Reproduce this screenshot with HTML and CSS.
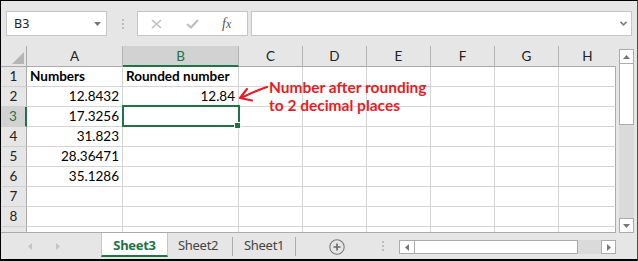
FILE: index.html
```html
<!DOCTYPE html>
<html>
<head>
<meta charset="utf-8">
<link rel="stylesheet" href="styles.css">
</head>
<body>
<div class="app">
  <div class="fbar">
    <div class="namebox"><span>B3</span><svg class="caret" width="7" height="4" viewBox="0 0 7 4"><polygon points="0,0 7,0 3.5,4" fill="#777"/></svg></div>
    <div class="grip"><i></i><i></i><i></i></div>
    <div class="fbtns">
      <svg class="bx" width="11" height="10" viewBox="0 0 11 10"><path d="M1 1 L10 9 M10 1 L1 9" stroke="#bdbdbd" stroke-width="1.4" fill="none"/></svg>
      <svg class="bc" width="13" height="10" viewBox="0 0 13 10"><path d="M1 5 L5 8.5 L12 1" stroke="#bdbdbd" stroke-width="2" fill="none"/></svg>
      <span class="fx">f<span>x</span></span>
    </div>
    <div class="finput"><svg width="7" height="5" viewBox="0 0 7 5"><path d="M0.5 0.8 L3.5 3.8 L6.5 0.8" stroke="#808080" stroke-width="1.6" fill="none"/></svg></div>
  </div>
  <div class="main">
    <div class="sheet">
      <div class="grid">
        <div class="corner"></div><div class="ch">A</div><div class="ch sel">B</div><div class="ch">C</div><div class="ch">D</div><div class="ch">E</div><div class="ch">F</div><div class="ch">G</div><div class="ch last">H</div>

        <div class="rh">1</div><div class="c b">Numbers</div><div class="c b">Rounded number</div><div class="c"></div><div class="c"></div><div class="c"></div><div class="c"></div><div class="c"></div><div class="c last"></div>
        <div class="rh">2</div><div class="c r">12.8432</div><div class="c r">12.84</div><div class="c"></div><div class="c"></div><div class="c"></div><div class="c"></div><div class="c"></div><div class="c last"></div>
        <div class="rh sel">3</div><div class="c r">17.3256</div><div class="c"></div><div class="c"></div><div class="c"></div><div class="c"></div><div class="c"></div><div class="c"></div><div class="c last"></div>
        <div class="rh">4</div><div class="c r">31.823</div><div class="c"></div><div class="c"></div><div class="c"></div><div class="c"></div><div class="c"></div><div class="c"></div><div class="c last"></div>
        <div class="rh">5</div><div class="c r">28.36471</div><div class="c"></div><div class="c"></div><div class="c"></div><div class="c"></div><div class="c"></div><div class="c"></div><div class="c last"></div>
        <div class="rh">6</div><div class="c r">35.1286</div><div class="c"></div><div class="c"></div><div class="c"></div><div class="c"></div><div class="c"></div><div class="c"></div><div class="c last"></div>
        <div class="rh">7</div><div class="c"></div><div class="c"></div><div class="c"></div><div class="c"></div><div class="c"></div><div class="c"></div><div class="c"></div><div class="c last"></div>
        <div class="rh">8</div><div class="c"></div><div class="c"></div><div class="c"></div><div class="c"></div><div class="c"></div><div class="c"></div><div class="c"></div><div class="c last"></div>
        <div class="rh"></div><div class="c"></div><div class="c"></div><div class="c"></div><div class="c"></div><div class="c"></div><div class="c"></div><div class="c"></div><div class="c last"></div>
      </div>
      <div class="selbox"></div>
      <div class="handle"></div>
      <svg class="arrow" width="36" height="26" viewBox="0 0 36 26"><path d="M31 9 C22 12 13 16 5 20 M11 11 L4 20 L16 22.5" stroke="#e81c24" stroke-width="2.2" fill="none" stroke-linecap="round" stroke-linejoin="round"/></svg>
      <div class="note">Number after rounding<br>to 2 decimal places</div>
    </div>
    <div class="vscroll">
      <div class="vbtn"><svg width="7" height="4" viewBox="0 0 7 4"><polygon points="0,4 7,4 3.5,0" fill="#777"/></svg></div>
      <div class="vthumb"></div>
      <div class="vtrack"></div>
      <div class="vbtn down"><svg width="7" height="4" viewBox="0 0 7 4"><polygon points="0,0 7,0 3.5,4" fill="#777"/></svg></div>
    </div>
  </div>
  <div class="tabbar">
    <div class="nav">
      <svg class="nl" width="4" height="7" viewBox="0 0 4 7"><polygon points="4,0 4,7 0,3.5" fill="#c4c4c4"/></svg>
      <svg class="nr" width="4" height="7" viewBox="0 0 4 7"><polygon points="0,0 0,7 4,3.5" fill="#c4c4c4"/></svg>
    </div>
    <div class="tab active">Sheet3</div>
    <div class="tab t2">Sheet2</div>
    <div class="sep"></div>
    <div class="tab t1">Sheet1</div>
    <div class="sep"></div>
    <svg class="add" width="16" height="16" viewBox="0 0 16 16"><circle cx="8" cy="8" r="7.2" stroke="#7a7a7a" stroke-width="1.1" fill="none"/><path d="M8 4.5 V11.5 M4.5 8 H11.5" stroke="#6a6a6a" stroke-width="1.6"/></svg>
    <div class="tdots"><i></i><i></i><i></i></div>
    <div class="hscroll">
      <div class="hbtn"><svg width="4" height="7" viewBox="0 0 4 7"><polygon points="4,0 4,7 0,3.5" fill="#777"/></svg></div>
      <div class="hthumb"></div>
      <div class="htrack"></div>
      <div class="hbtn right"><svg width="4" height="7" viewBox="0 0 4 7"><polygon points="0,0 0,7 4,3.5" fill="#777"/></svg></div>
    </div>
  </div>
</div>
</body>
</html>
```
FILE: styles.css
```css
* { box-sizing: border-box; }
body { margin: 0; }
.app {
  width: 638px; height: 261px;
  background: #e6e6e6;
  border-top: 1px solid #000;
  border-left: 1px solid #000;
  border-bottom: 2px solid #000;
  border-right: 1px solid #1f6b43;
  display: flex; flex-direction: column;
  overflow: hidden;
  font-family: Lato, "Noto Sans", sans-serif;
}
/* formula bar */
.fbar { display: flex; height: 25px; margin-top: 10px; padding: 0 5px; flex: none; }
.namebox {
  width: 101px; background: #fff; border: 1px solid #c6c6c6;
  display: flex; align-items: center; padding-left: 7px; padding-right: 5px;
  font: 12.5px "Noto Sans", sans-serif; color: #222;
}
.namebox .caret { margin-left: auto; }
.grip { width: 30px; display: flex; flex-direction: column; align-items: flex-start; padding: 8px 0 0 15px; gap: 2px; }
.grip i, .tdots i { display: block; width: 2px; height: 2px; background: #bdbdbd; }
.fbtns { width: 111px; background: #fff; border: 1px solid #c6c6c6; display: flex; align-items: center; }
.fbtns .bx { margin-left: 13px; }
.fbtns .bc { margin-left: 24px; }
.fx { margin-left: 23px; font: italic 14px "Liberation Serif", serif; color: #555; line-height: 1; }
.fx span { font-size: 12px; }
.finput { flex: 1; margin-left: 3px; background: #fff; border: 1px solid #c6c6c6; display: flex; align-items: center; justify-content: flex-end; padding-right: 4px; }
/* sheet */
.main { display: flex; height: 187px; margin-top: 10px; flex: none; }
.sheet { width: 615px; height: 187px; position: relative; overflow: hidden; border-bottom: 1px solid #ababab; flex: none; }
.grid {
  display: grid;
  grid-template-columns: 26px 96px 116px repeat(5, 64px) 57px;
  grid-template-rows: 21px;
  grid-auto-rows: 20px;
  font-size: 13.5px;
}
.corner { border-right: 1px solid #ababab; border-bottom: 1px solid #ababab; position: relative; }
.corner::after {
  content: ""; position: absolute; right: 2px; bottom: 2px; width: 12px; height: 12px;
  background: #b5b5b5; clip-path: polygon(100% 0, 100% 100%, 0 100%);
}
.ch { border-right: 1px solid #b4b4b4; border-bottom: 1px solid #ababab; text-align: center; line-height: 20px; color: #222; }
.ch.last { border-right: none; }
.ch.sel { background: #d2d2d2; color: #217346; border-bottom: 2px solid #217346; }
.rh { border-right: 1px solid #ababab; border-bottom: 1px solid #d0d0d0; text-align: center; line-height: 19px; color: #222; }
.rh.sel { background: #d2d2d2; color: #217346; border-right: 2px solid #217346; }
.c { background: #fff; border-right: 1px solid #d4d4d4; border-bottom: 1px solid #d4d4d4; line-height: 19px; padding: 0 3px; color: #000; white-space: nowrap; }
.c.last { border-right: 1px solid #ababab; }
.c.r { text-align: right; }
.c.b { font-weight: bold; }
.selbox { position: absolute; left: 121px; top: 59px; width: 118px; height: 22px; border: 2px solid #217346; }
.handle { position: absolute; left: 233px; top: 76px; width: 7px; height: 7px; background: #217346; border: 1px solid #fff; }
.arrow { position: absolute; left: 235px; top: 32px; }
.note { position: absolute; left: 268px; top: 32px; font: bold 15.5px/18px Lato, sans-serif; color: #e81c24; white-space: nowrap; }
/* vertical scroll */
.vscroll { width: 15px; margin-left: 3px; margin-top: 3px; height: 184px; display: flex; flex-direction: column; flex: none; }
.vbtn { height: 15px; background: #fff; border: 1px solid #ababab; display: flex; align-items: center; justify-content: center; flex: none; }
.vthumb { height: 61px; background: #fff; border: 1px solid #ababab; border-top: none; flex: none; }
.vtrack { flex: 1; background: #dadada; }
/* tabs */
.tabbar { display: flex; height: 26px; flex: none; font: 13px "Noto Sans", sans-serif; letter-spacing: -0.3px; color: #444; }
.nav { width: 100px; display: flex; align-items: flex-start; padding-top: 10px; flex: none; }
.nav .nl { margin-left: 27px; }
.nav .nr { margin-left: 24px; }
.tab { height: 24px; padding-top: 2px; line-height: 20px; flex: none; }
.tab.active { width: 67px; background: #fff; border-left: 1px solid #c6c6c6; border-right: 1px solid #c6c6c6; border-bottom: 2px solid #217346; text-align: center; font-weight: bold; color: #217346; }
.tab.t2 { width: 64px; padding-left: 10px; }
.tab.t1 { width: 62px; padding-left: 11px; }
.sep { width: 1px; height: 19px; margin-top: 4px; background: #ababab; flex: none; }
.add { margin-left: 33px; margin-top: 6px; flex: none; }
.tdots { display: flex; flex-direction: column; gap: 2px; margin-left: 37px; margin-top: 8px; flex: none; }
.hscroll { display: flex; width: 217px; height: 14px; margin-left: 15px; margin-top: 7px; flex: none; }
.hbtn { width: 16px; background: #fff; border: 1px solid #ababab; display: flex; align-items: center; justify-content: center; flex: none; }
.hbtn.right { width: 15px; }
.hthumb { width: 163px; background: #fff; border: 1px solid #ababab; border-left: none; flex: none; }
.htrack { flex: 1; background: #dadada; }
```
